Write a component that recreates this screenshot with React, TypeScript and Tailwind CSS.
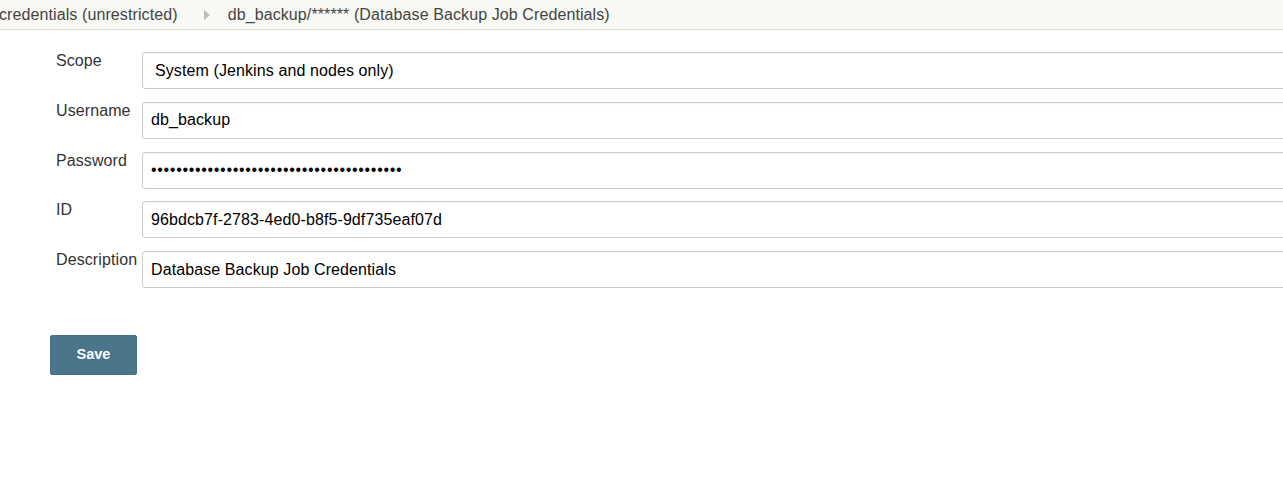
import { ReactNode } from "react";

const Row = ({ label, children }: { label: string; children: ReactNode }) => (
  <div className="flex">
    <div className="mt-[-3px] w-[86px] shrink-0 text-[16px] tracking-[0.1px] text-[#333]">{label}</div>
    <div className="w-[1180px] shrink-0">{children}</div>
  </div>
);

const inputCls =
  "block h-[37px] w-full rounded-[3px] border border-[#ccc] bg-white px-[8px] text-[16px] tracking-[0.1px] text-black outline-none shadow-[inset_0_1px_1px_rgba(0,0,0,0.04)]";

export default function App() {
  return (
    <div className="h-[496px] w-[1283px] overflow-hidden bg-white font-['Liberation_Sans',Arial,sans-serif]">
      <div className="flex h-[30px] items-center border-b border-[#ddd] bg-[#f8f9f4] text-[16px] tracking-[0.1px] text-[#444]">
        <span className="ml-[-1px]">credentials (unrestricted)</span>
        <svg className="ml-[26px]" width="6" height="10" viewBox="0 0 6 10">
          <path d="M0 0 L6 5 L0 10 Z" fill="#bbb" />
        </svg>
        <span className="ml-[18px]">db_backup/****** (Database Backup Job Credentials)</span>
      </div>

      <div className="flex flex-col gap-[12.75px] pl-[56px] pt-[22px]">
        <Row label="Scope">
          <div className={`${inputCls} flex items-center px-[12px]`}>System (Jenkins and nodes only)</div>
        </Row>
        <Row label="Username">
          <input className={inputCls} defaultValue="db_backup" readOnly />
        </Row>
        <Row label="Password">
          <div className={`${inputCls} flex items-center`}>
            <span className="tracking-[0.68px] text-[16px] leading-none">
              {"•".repeat(40)}
            </span>
          </div>
        </Row>
        <Row label="ID">
          <input className={inputCls} defaultValue="96bdcb7f-2783-4ed0-b8f5-9df735eaf07d" readOnly />
        </Row>
        <Row label="Description">
          <input className={inputCls} defaultValue="Database Backup Job Credentials" readOnly />
        </Row>
      </div>

      <div className="pl-[50px] pt-[47px]">
        <button className="h-[40px] w-[87px] rounded-[2px] border border-[#46708a] bg-[#4b758b] text-[14.5px] font-bold text-white">
          Save
        </button>
      </div>
    </div>
  );
}
